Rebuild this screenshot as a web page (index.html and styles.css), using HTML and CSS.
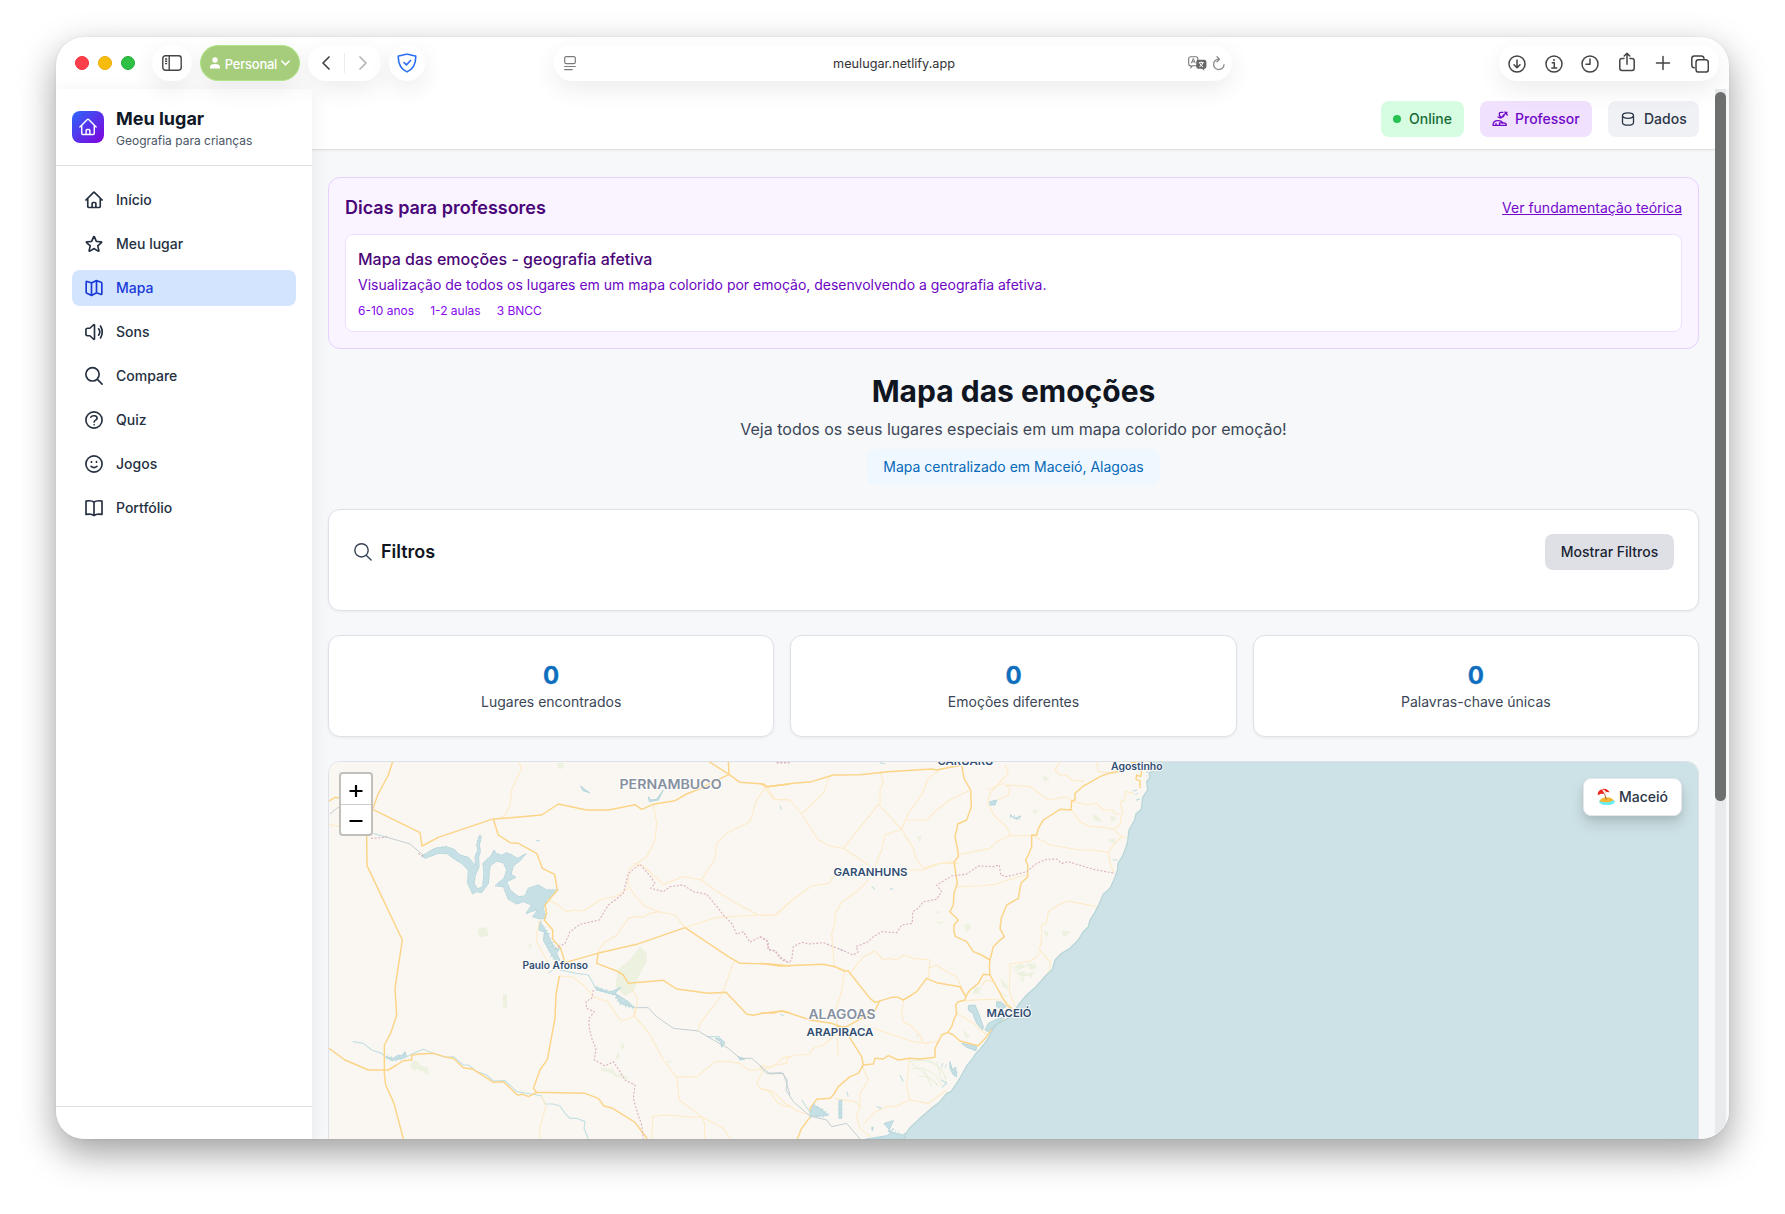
FILE: index.html
```html
<!DOCTYPE html>
<html lang="pt-BR">
<head>
<meta charset="utf-8">
<title>Meu lugar</title>
<link rel="stylesheet" href="styles.css">
</head>
<body>
<div class="window">
  <div class="toolbar">
    <div class="lights"><i class="red"></i><i class="yellow"></i><i class="green-light"></i></div>
    <div class="pill side-btn">
      <svg width="20" height="16" viewBox="0 0 20 16" fill="none" stroke="#444" stroke-width="1.4"><rect x=".8" y=".8" width="18.4" height="14.4" rx="2.6"/><path d="M7.2 1v14M3 4h2.2M3 6.300h2.200M3 8.600h2.200" /></svg>
    </div>
    <div class="pill profile">
      <svg width="10" height="12" viewBox="0 0 10 12" fill="#fff"><circle cx="5" cy="3" r="2.700"/><path d="M0 11.500V10c0-2 1.800-3 5-3s5 1 5 3v1.500z"/></svg>
      <span>Personal</span>
      <svg width="9" height="6" viewBox="0 0 9 6" fill="none" stroke="#fff" stroke-width="1.500" stroke-linecap="round"><path d="m.8 1 3.700 3.800L8.200 1"/></svg>
    </div>
    <div class="pill history">
      <svg width="8" height="14" viewBox="0 0 8 14" fill="none" stroke="#444" stroke-width="1.700" stroke-linecap="round" stroke-linejoin="round"><path d="M7 1 1 7l6 6"/></svg>
      <span class="divider"></span>
      <svg width="8" height="14" viewBox="0 0 8 14" fill="none" stroke="#b4b4b4" stroke-width="1.700" stroke-linecap="round" stroke-linejoin="round"><path d="m1 1 6 6-6 6"/></svg>
    </div>
    <div class="pill shield">
      <svg width="20" height="20" viewBox="0 0 20 20" fill="none" stroke="#2b6ef6" stroke-width="1.600" stroke-linecap="round" stroke-linejoin="round"><path d="M1.300 3C4 2.800 7 1.200 10 1.200S16 2.800 18.700 3C19 10 17 15.500 10 18.900 3 15.500 1 10 1.300 3Z"/><path d="m7 9.500 2.400 2.400L13.600 7.500"/></svg>
    </div>
    <div class="pill address">
      <svg width="12" height="15" viewBox="0 0 12 15" fill="none" stroke="#7a7a7a" stroke-width="1.200" stroke-linecap="round"><rect x=".7" y=".7" width="10.600" height="7" rx="1.600"/><path d="M.7 10.500h10.600M.7 13.700h7.500"/></svg>
      <span class="url">meulugar.netlify.app</span>
      <span class="address-tools">
        <svg width="19" height="15" viewBox="0 0 19 15"><path d="M2.500.7h5.300q2 0 2 2v5q0 2-2 2H4.500L3 11.500V9.700q-2.300 0-2.300-2v-5q0-2 1.800-2Z" fill="none" stroke="#777" stroke-width="1.100"/><path d="M3.300 7.300 5.300 2.500l2 4.800M4 5.800h2.600" fill="none" stroke="#777"/><path d="M10.300 3.800h5.900q2.200 0 2.200 2v5q0 2-2.200 2v2l-2-2h-3.900q-2 0-2-2v-5q0-2 2-2Z" fill="#666"/><path d="M10.800 6.700h5M13.300 5.500v1.200M11.400 10.800q3-1.500 3.500-4M11.700 7.200q1 2.500 3.500 3.700" fill="none" stroke="#fff"/></svg>
        <svg width="13" height="15" viewBox="0 0 13 15" fill="none" stroke="#8a8a8a" stroke-width="1.300" stroke-linecap="round" stroke-linejoin="round"><path d="M7 3.200a5.200 5.200 0 1 0 5 5.500M5 .8 7.500 3.200 5 5.700"/></svg>
      </span>
    </div>
    <div class="pill actions">
      <svg width="18" height="18" viewBox="0 0 18 18"><circle cx="9" cy="9" r="8"/><path d="M9 5v7.500M6 9.700l3 3 3-3"/></svg>
      <svg width="18" height="18" viewBox="0 0 18 18"><circle cx="9" cy="9" r="8"/><path d="M7.300 7.700h2v5M6.800 12.900h5M9 4.600v.8"/></svg>
      <svg width="18" height="18" viewBox="0 0 18 18"><circle cx="9" cy="9" r="8"/><path d="M9 4v5.200H5"/></svg>
      <svg width="18" height="20" viewBox="0 0 18 20"><path d="M6 6.500H4q-2.200 0-2.200 2.200v7.600Q1.800 18.500 4 18.500h10q2.200 0 2.200-2.200V8.700q0-2.200-2.200-2.200h-2M9 12.300V1.300M6.200 4 9 1.300 11.800 4"/></svg>
      <svg width="18" height="18" viewBox="0 0 18 18"><path d="M9 2.500v13M2.500 9h13"/></svg>
      <svg width="18" height="18" viewBox="0 0 18 18"><rect x="5" y="4.800" width="12.300" height="12.300" rx="2.600"/><path d="M3.200 12.800Q.8 12.500.8 10.300V3.400Q.8.900 3.300.9h7Q12.700.9 13 3.300"/></svg>
    </div>
  </div>

  <div class="page">
    <aside class="sidebar">
      <div class="brand">
        <div class="logo"><svg class="icon" viewBox="0 0 24 24"><use href="#home"/></svg></div>
        <div><h1>Meu lugar</h1><p>Geografia para crianças</p></div>
      </div>
      <nav>
        <a><svg class="icon" viewBox="0 0 24 24"><path id="home" d="m2.250 12 8.954-8.955c.44-.439 1.152-.439 1.591 0L21.750 12M4.500 9.750v10.125c0 .621.504 1.125 1.125 1.125H9.750v-4.875c0-.621.504-1.125 1.125-1.125h2.250c.621 0 1.125.504 1.125 1.125V21h4.125c.621 0 1.125-.504 1.125-1.125V9.750M8.250 21h8.250"/></svg>Início</a>
        <a><svg class="icon" viewBox="0 0 24 24"><path d="M11.480 3.499a.562.562 0 0 1 1.040 0l2.125 5.111a.563.563 0 0 0 .475.345l5.518.442c.499.040.701.663.321.988l-4.204 3.602a.563.563 0 0 0-.182.557l1.285 5.385a.562.562 0 0 1-.840.610l-4.725-2.885a.562.562 0 0 0-.586 0L6.982 20.540a.562.562 0 0 1-.840-.610l1.285-5.386a.562.562 0 0 0-.182-.557l-4.204-3.602a.562.562 0 0 1 .321-.988l5.518-.442a.563.563 0 0 0 .475-.345L11.480 3.500Z"/></svg>Meu lugar</a>
        <a class="active"><svg class="icon" viewBox="0 0 24 24"><path d="M9 6v15M15 3v15M9.500 5.800 14.500 3.200q.5-.2 1 0l5 1.900q.9.400.9 1.300v12.300q0 1.200-1.200.9L15.500 18q-.5-.2-1 0l-5 2.700q-.5.300-1 0l-5-2.300q-.9-.4-.9-1.300V5q0-1.300 1.200-.8L8.500 5.800q.5.200 1 0Z"/></svg>Mapa</a>
        <a><svg class="icon" viewBox="0 0 24 24"><path d="M17.500 8.200q3 3.800 0 7.600M19.800 4.800q4.200 7.200 0 14.400M12.600 4.300v15.400q0 1.700-1.300.7L7 16.500H4.300Q2.300 16.500 2.300 14.500v-5q0-2 2-2H7l4.300-3.900q1.300-1 1.300.7Z"/></svg>Sons</a>
        <a><svg class="icon" viewBox="0 0 24 24"><path id="search" d="m21.700 21.700-5.900-5.900M18.200 10a8 8 0 1 1-16 0 8 8 0 0 1 16 0Z"/></svg>Compare</a>
        <a><svg class="icon" viewBox="0 0 24 24"><circle cx="12" cy="12" r="9.700"/><path d="M8.200 8.600c1.500-2.600 7.500-2.300 7.500 1.300 0 2.500-3.500 2-3.500 4.400M12.200 17.700v.1"/></svg>Quiz</a>
        <a><svg class="icon" viewBox="0 0 24 24"><circle cx="12" cy="12" r="9.700"/><path d="M8.500 14.800q3.500 3 7 0M9 9.100v.7M15 9.100v.7"/></svg>Jogos</a>
        <a><svg class="icon" viewBox="0 0 24 24"><path d="M12 5v16M12 5Q9 2.500 2.400 3.700v16Q9 18.500 12 21q3-2.500 9.600-1.300v-16Q15 2.500 12 5Z"/></svg>Portfólio</a>
      </nav>
      <div class="sidebar-foot"></div>
    </aside>

    <div class="main">
      <header>
        <div class="chip online"><i></i>Online</div>
        <div class="chip teacher"><svg width="16" height="16" viewBox="0 0 16 16"><path d="M1 14.300q0-4.600 5-4.600 4 0 4.800 2.600M1 14.300h13.300q0-2.400-2.500-2.400H7.500v2.400M4 14v-1.500M7.300 3Q7.300 1.300 9 1.300h2M7.300 3q0 3 2.300 3.200 2.300 0 2.600-2.500M6 6l3 1.200M11 4.500l4-3.200M13 1l2.300 3"/></svg>Professor</div>
        <div class="chip data"><svg width="16" height="16" viewBox="0 0 16 16"><path d="M13.500 4.500C13.500 6.300 11 7.300 8 7.300S2.500 6.300 2.500 4.500 5 1.800 8 1.800s5.500.9 5.500 2.700ZM2.500 4.500v7q0 2.700 5.500 2.700t5.500-2.700v-7"/></svg>Dados</div>
      </header>

      <main>
        <section class="tips">
          <div class="tips-head"><h2>Dicas para professores</h2><a>Ver fundamentação teórica</a></div>
          <div class="tip">
            <h3>Mapa das emoções - geografia afetiva</h3>
            <p>Visualização de todos os lugares em um mapa colorido por emoção, desenvolvendo a geografia afetiva.</p>
            <div class="tags"><span>6-10 anos</span><span>1-2 aulas</span><span>3 BNCC</span></div>
          </div>
        </section>

        <section class="intro">
          <h2>Mapa das emoções</h2>
          <p>Veja todos os seus lugares especiais em um mapa colorido por emoção!</p>
          <span class="location">Mapa centralizado em Maceió, Alagoas</span>
        </section>

        <section class="card filters">
          <h3><svg class="icon thin" viewBox="0 0 24 24"><use href="#search"/></svg>Filtros</h3>
          <button>Mostrar Filtros</button>
        </section>

        <section class="stats">
          <div class="card stat"><b>0</b><span>Lugares encontrados</span></div>
          <div class="card stat"><b>0</b><span>Emoções diferentes</span></div>
          <div class="card stat"><b>0</b><span>Palavras-chave únicas</span></div>
        </section>

        <section class="map">
          <svg class="tiles" viewBox="329 762 1369 400" width="1369" height="400">
            <rect x="329" y="762" width="1369" height="400" fill="#faf7f2"/>
            <!-- western half: reservoir, roads, state borders -->
            <g transform="translate(310 740) scale(.333333)">
              <g class="green">
                <path d="M990 620 1010 638 1010 665 990 700 970 755 945 768 917 740 922 690 958 660ZM503 567 530 560 536 587 508 592ZM579 763h12v40h-12ZM300 975l10-14 15 5 5 10 22 6 6 24-12-4-5-10-10 2-10-8-12 6ZM655 612l12 2-8 14ZM870 982l15 4 25 2 8 14 20 3 20 8-15 6-14-8-12 0-12-12-30-6ZM935 905l10 15-12 10ZM745 68h14l4 10-8 9-10-3-4-8ZM920 945l5-12 4 17-12 10ZM1070 960l18 3-14 7Z"/>
              </g>
              <g class="lake">
                <path id="reservoir" d="M335 348 375 325 408 320 433 328 450 345 475 352 490 370 497 375 495 350 504 330 500 315 509 285 514 290 508 315 511 335 506 350 507 380 496 405 492 430 503 447 518 440 522 400 519 370 545 345 552 330 558 340 575 346 590 338 605 345 623 355 648 341 630 362 610 378 603 403 618 412 590 425 600 450 625 470 645 468 655 445 685 435 710 450 745 450 710 480 700 505 708 535 690 537 668 530 685 508 648 520 665 495 640 485 620 492 595 478 580 440 555 437 582 415 590 390 580 368 560 363 540 378 535 430 515 458 500 455 488 462 473 430 475 390 455 370 430 355 410 340 385 340 345 355Z"/>
                <path d="M690 545 700 560 712 580 735 630 750 622 740 640 750 662 738 663 722 640 700 600 704 577 687 570Z"/>
                <path d="M228 950 250 955 265 945 275 948 285 935 290 950 278 955 262 958 245 962ZM1015 170 1022 180 1040 178 1060 150 1045 180 1018 185ZM855 740 900 757 933 742 915 760 955 785 972 803 930 790 918 765 860 750ZM1215 895 1230 895 1245 908 1235 922 1232 905ZM1285 950 1305 957 1290 960ZM812 138l15 12 12 8-20-6Z"/>
              </g>
              <g class="jagged"><use href="#reservoir"/><path d="M690 545 704 577 722 640 740 663M750 622 735 630 712 580 700 560M860 745 900 757 918 765 930 790 972 803M230 952 262 958 290 945"/></g>
              <g class="river">
                <path d="M128 905 160 910 185 930 215 940 230 955M290 950 310 940 340 928 360 936 385 945 410 952 430 950 460 975 475 975 500 995 530 1005 550 1023 585 1022 620 1055 665 1062 695 1068 705 1092 730 1092 750 1098 765 1120 780 1135 800 1135 825 1145 822 1165 835 1197M190 280 230 292M750 690 800 700 835 705 855 740M715 700l25-20M1190 890h40M678 302h12"/>
              </g>
              <g class="stream"><path d="M225 290 300 312 345 350M60 222 80 205 90 200M972 803 1015 803 1040 830 1090 865 1165 873 1210 900 1255 925 1290 955 1325 955 1380 1002 1420 1000 1430 1030 1440 1065"/></g>
              <g class="minor">
                <path d="M627 65 635 85 605 150 600 195 585 225 570 237M57 253 90 260M1030 195 1040 250 1035 300 1010 350 960 385 952 430 970 460 1000 495 1045 515 1095 525 1125 563M865 635 880 610 920 585 955 535 980 530 1000 532 1020 520 1045 515M715 480 740 492 770 515 790 510 820 513 870 480 920 468 955 445M970 370 1000 378 1030 405 1060 433 1120 410 1175 420 1215 355 1220 310 1250 280 1320 245 1340 180 1368 140M1175 420 1200 440 1270 485 1345 525 1397 525 1440 487M1125 563 1215 533 1345 525M690 540 680 580 680 605 700 640 715 670M750 708 790 712 820 735 850 770 895 785 915 820 935 843 970 830 975 805M955 730 982 775 975 830 1018 880 1060 960 1100 1012 1160 1010 1185 990 1215 965 1260 965 1290 970 1315 990 1345 990 1360 975 1380 985 1425 950 1440 955M1100 1012 1108 1080 1175 1130 1240 1165 1262 1197M1026 1197 1028 1130 1060 1125 1100 1127 1140 1132 1175 1130 1184 1150 1184 1197M1272 665 1235 765 1170 850 1165 873M1360 990 1340 1030 1350 1045 1375 1050 1400 1085 1420 1098 1440 1100M695 1068 708 1100 690 1160 688 1197M1370 140 1395 178 1440 180"/>
              </g>
              <g class="major">
                <path d="M248 65 235 105 203 165 188 208 330 278 336 318 385 292 545 238 695 225 745 192 830 210 895 210 975 194 995 208 1030 193 1095 182 1130 162 1165 148 1257 103 1255 65M1197 65 1257 103 1290 127 1360 132 1370 140 1440 132M550 238 565 285 600 308 625 310 680 340 697 385 734 403 742 450 705 495 710 520 703 540 728 570 728 597 752 625 765 668 863 640 980 613 1125 563 1255 650 1290 670 1380 672 1440 678M57 183 75 172 90 175M170 285 171 377 277 600 255 745 260 825 242 880 223 915 223 1000 227 1035 252 1090 280 1197M57 925 105 960 175 990 235 990 260 975 280 962 305 960 305 945 330 942 370 940 410 952 430 955 460 983 490 988 550 1027 580 1025 622 1065 640 1063 655 1070 680 1057 825 1060 865 1075 882 1098 908 1105 975 1147 1012 1197M748 708 738 765 735 835 712 958 690 990 670 1045 680 1057M865 638 860 670 920 693 940 705 955 730 1060 721 1100 747 1195 760 1248 757 1310 822 1330 826 1365 818 1390 820 1410 813 1440 818"/>
              </g>
              <g class="border">
                <path d="M183 295 215 293 230 290M325 340l15 10M735 625 765 610 780 575 810 553 868 540 895 495 915 480 940 460 955 400 990 373 1022 410 1035 430 1022 445 1060 455 1080 440 1120 435 1150 455 1190 463 1225 505 1240 525 1265 550 1280 583 1300 575 1320 607 1350 590 1375 605 1375 628 1395 633 1415 660 1440 668M850 750 845 775 828 785 830 805 853 815 837 835 837 860 845 895 858 925 853 960 885 978 910 965 930 995 945 1020 975 1035 970 1075 983 1120 995 1155 1000 1197M1400 68h40"/>
              </g>
            </g>
            <!-- eastern half: coastline, roads, lagoons -->
            <g transform="translate(760 740) scale(.333333)">
              <g class="green"><path d="M760 680l25-10 10 12-18 4ZM800 672l25-2 5 15-18 5ZM770 700l20-6 15 12-20 5ZM800 702l22-8-8 20ZM778 716l15-4-4 14ZM720 715l22 20 4 15-16-8ZM612 555 632 550 630 570 618 577ZM525 545 555 545 540 552ZM525 515l18-2-8 8ZM645 742l22-2-14 20-15 2ZM820 210 840 212 820 222ZM1000 220 1020 235 1025 245 1000 240ZM1040 300 1065 295 1065 312ZM470 290 485 285 480 305ZM905 572 935 575 910 592ZM470 880 480 885 470 895ZM845 105 870 115 855 125ZM1050 225l20 10-15 12ZM850 570l16 8-6 15ZM605 868l25 20-10 8Z"/></g>
              <g class="veg"><path d="M450 965q70-20 110 50M455 985q60-10 90 50M475 1010q30-10 60 30M500 960q50 10 60 70M455 970l80 65M490 985l25 55M530 965l15 60M755 680l30 25M770 690l35-15M640 745l25 20M715 755l30 15"/></g>
              <g class="minor">
                <path d="M10 138 40 178 90 180 125 222 175 300 210 318 250 325 355 193 425 268 460 325 468 355 490 385 530 372 580 365M125 222 190 160 208 110M360 95 370 125 360 150 360 193M545 85 505 115 485 165 445 220 425 268 375 285 365 330 345 380M440 240 500 240 530 210 570 180 630 150M250 325 325 375M0 527 48 525 90 485 155 438 205 430 225 405M325 420 290 455 245 487 225 520 225 550 215 580 223 680 253 695M440 390 490 390 540 370 595 370M590 345 640 335 690 325 710 305 750 287 820 287 870 315 960 330 1000 330 1045 338 1050 370 1060 395M750 287 740 260 705 230 683 190 690 160 730 115 745 100 735 75M683 150 730 130 750 145 745 165 715 180M740 135 810 140 865 180 920 170 940 185 980 195 1010 190 1030 210 1060 210 1065 222 1085 222 1080 255 1060 268 1030 262 985 258 960 245 935 210M590 440 660 438 705 433 750 418 800 405M1010 500 960 490 925 483 895 495 865 515 860 545 845 555 845 600 838 630 870 665 870 690 830 740M838 640 825 655 805 665 750 672 748 755 765 800M275 695 310 650 345 633 370 660 390 655 410 660 430 645 460 655 510 660 505 715M505 685 530 675 560 695 590 710 615 765M615 782 680 778 725 780M590 820 640 850 680 885M430 780 425 820 430 845 450 855 480 885 490 910 540 903M340 865 400 885 460 905 500 910M253 695 245 755 230 800 230 850 235 950M250 865 190 915 160 925 150 942 110 945 80 952 80 970 45 975 0 990M305 975 325 1020 300 1060 300 1100 290 1130 300 1165 330 1190M448 957 440 1040 450 1080 505 1090 560 1050M448 1080 410 1098 380 1100 345 1115 310 1155M0 1047 40 1055 75 1090 110 1112 150 1125M225 1075 285 1085 300 1100M900 65 885 90 900 105 920 105 935 120 975 125M1010 65 1015 95 1060 100M1120 160 1095 155 1095 180 1080 185 1090 222M1060 268 1085 290 1100 295M1085 290 1060 315 1045 338M720 765 760 810M700 725 680 720 665 735"/>
              </g>
              <g class="major">
                <path d="M0 130 22 140 100 130 155 125 220 105 300 104 385 95 515 87 530 90 605 75 612 115 632 150 634 200 620 240 593 252 590 270 585 290 593 330 595 350 582 365 592 430 582 460 580 495 570 515 595 540 582 555 582 575 587 590 620 605 640 635 665 645 690 660M1075 95 1055 98 1035 104 1020 110 985 130 970 138 945 160 945 180 935 183 933 210 900 208 850 240 835 265 830 285 815 285 815 320 805 345 797 360 803 375 803 410 783 430 775 475 740 495 730 520 725 530 720 565 733 590 715 605 700 620 690 660 688 680 690 705 740 795 755 805M690 705 670 703 655 730 630 750 620 765 615 780 595 785 587 795 590 820 583 835 575 860 563 877 545 885 525 925 525 952 480 957 450 955 415 960 385 947 370 957 345 955 340 972 310 975 295 1000 270 1010 235 1040 220 1065 210 1075 170 1078 150 1105 152 1130 140 1145 125 1165 112 1197M0 670 60 678 190 673 225 680 255 693 265 693 330 775 345 787 395 772 415 772 430 780 455 765 470 755 500 715 530 728 600 740 617 770M0 820 70 813 150 840 215 850 250 862 305 950 310 975M230 860 260 860 345 812 358 785M563 877 580 885 600 903 655 917 680 890 705 850 740 838M1110 65 1130 68M1145 90 1142 110 1130 105 1128 118 1140 122 1140 145"/>
              </g>
              <path class="sea" d="M1180 60 1178 93 1168 100 1170 112 1160 125 1163 150 1148 172 1144 208 1128 222 1124 240 1107 270 1103 303 1097 325 1087 350 1074 370 1073 388 1064 415 1050 445 1030 463 1017 493 1003 520 990 540 985 560 970 575 955 600 930 625 905 640 885 660 877 688 850 715 828 740 800 765 775 795 750 832 715 850 700 865 683 898 662 925 648 940 638 955 620 978 605 1005 590 1030 573 1055 560 1060 540 1085 520 1100 485 1130 450 1163 435 1185 437 1270H2820V60Z"/>
              <g class="lake"><path d="M625 797 645 795 655 818 670 860 668 870 650 850 638 820 625 810ZM710 785 725 787 738 800 725 808 710 800ZM675 870 685 850 715 835 735 832 705 855 685 875ZM605 910 650 920 648 932 620 922ZM160 1095 180 1105 205 1125 160 1130 150 1120ZM237 1085 245 1080 245 1135 237 1135ZM373 1150 400 1142 385 1175 430 1185 435 1197H318L380 1187 395 1178ZM570 965 575 985 588 990 590 1010 580 1005 570 985ZM750 225 765 235 783 228 770 238ZM690 185 710 180 705 195 690 195ZM335 1162l5 0-3 10Z"/></g>
              <g class="jagged"><path d="M160 1095 205 1125 150 1128M241 1080v55M375 1150l30 28 30 8M750 228l30 5M690 190l20-5M545 975l40 12 3 20M1165 95v30M1125 150l10 30"/></g>
              <g class="river"><path d="M335 440 345 448M390 445 400 448M60 198 65 210M360 68 375 72M420 1005 430 1025M545 1020 560 1030 545 1042M350 1100 365 1105M260 1055 265 1070M125 1080 155 1125M235 625l15 8M1058 360h15M60 822l12 6"/></g>
              <g class="stream"><path d="M0 978 20 1000 65 998 82 1020 78 1050 100 1085 150 1128 200 1140 215 1160 260 1150 300 1197"/></g>
              <g class="border"><path d="M0 590 20 600 25 630 45 632 60 650 85 668 95 660 100 620 125 607 150 612 190 608 220 620 240 628 280 645 295 635 288 620 325 605 340 590 365 575 410 578 425 555 457 550 458 515 475 505 490 485 530 478 545 455 530 435 575 408 620 402 655 378 700 380 718 375 722 405 740 410 800 395 830 370 860 358 890 357 905 370 925 365 1000 388 1065 400M50 68h35"/></g>
            </g>
            <g class="labels">
              <text x="619.500" y="789" font-size="12.500" textLength="102" lengthAdjust="spacingAndGlyphs" class="state">PERNAMBUCO</text>
              <text x="808.500" y="1019" font-size="12.500" textLength="67" lengthAdjust="spacingAndGlyphs" class="state">ALAGOAS</text>
              <text x="522.500" y="969.300" font-size="10" textLength="65.500" lengthAdjust="spacingAndGlyphs">Paulo Afonso</text>
              <text x="833.500" y="876.300" font-size="11" textLength="74" lengthAdjust="spacingAndGlyphs">GARANHUNS</text>
              <text x="806.500" y="1035.800" font-size="11" textLength="67" lengthAdjust="spacingAndGlyphs">ARAPIRACA</text>
              <text x="986.500" y="1016.800" font-size="11" textLength="45" lengthAdjust="spacingAndGlyphs">MACEIÓ</text>
              <text x="937.500" y="764.500" font-size="11" textLength="56" lengthAdjust="spacingAndGlyphs">CARUARU</text>
              <text x="1111" y="769.500" font-size="10" textLength="51.500" lengthAdjust="spacingAndGlyphs">Agostinho</text>
            </g>
          </svg>
          <div class="zoom"><span><svg width="14" height="14" viewBox="0 0 14 14"><path d="M7 1v12M.5 7h13"/></svg></span><span><svg width="14" height="14" viewBox="0 0 14 14"><path d="M.5 7h13"/></svg></span></div>
          <div class="city">
            <svg width="18" height="18" viewBox="0 0 18 18"><ellipse cx="10" cy="13.800" rx="7.900" ry="3.300" fill="#69ecf2"/><path d="M2.500 13q2-3.700 7-3.700 5.500.2 7 3-3 2-7 2-4.500 0-7-1.300Z" fill="#f7b733"/><path d="M7.500 5.500 9.300 11.500" stroke="#a9663d"/><path d="M.8 7.300Q.3 2.500 4.800 1.200 9.500-.2 12.700 4.200L9.500 4 7 6 4 5.700Z" fill="#e8291c"/><path d="M4.800 1.200Q7 1 9.500 4L7 6Q6.800 3.500 4.800 1.200Z" fill="#fff0e8"/></svg>
            <span>Maceió</span>
          </div>
        </section>
      </main>
    </div>
    <div class="scrollbar"><i></i></div>
  </div>
</div>
</body>
</html>
```
FILE: styles.css
```css
* { box-sizing: border-box; margin: 0; padding: 0; }
body { width: 1785px; height: 1214px; overflow: hidden; background: #fff; padding: 37px 56px 0; font-family: Inter, "Liberation Sans", sans-serif; color: #1e2939; font-size: 14px; line-height: 20px; }
.window { width: 1673px; height: 1102px; border-radius: 28px; overflow: hidden; background: #fff; box-shadow: 0 14px 36px rgba(0,0,0,.38), 0 0 2px rgba(0,0,0,.1); display: flex; flex-direction: column; }
svg { display: block; flex: none; }

/* Browser toolbar */
.toolbar { height: 52px; flex: none; display: flex; align-items: flex-start; padding: 8px 10px 0 19px; position: relative; z-index: 2; }
.lights { display: flex; gap: 9px; height: 36px; align-items: center; margin-right: 17px; }
.lights i { width: 14px; height: 14px; border-radius: 50%; }
.red { background: #fe3f4b; border: 1px solid #f02a38; }
.yellow { background: #f8bc0c; border: 1px solid #e9ab08; }
.green-light { background: #2fc146; border: 1px solid #22ad36; }
.pill { height: 36px; border-radius: 18px; background: #fff; box-shadow: 0 8px 24px rgba(0,0,0,.08); display: flex; align-items: center; justify-content: center; margin-right: 8px; flex: none; }
.side-btn { width: 40px; }
.profile { width: 100px; background: #a5cd7b; border: 1px solid #b1e486; color: #fff; font-size: 13px; font-weight: 500; gap: 4px; }
.profile span { letter-spacing: -.25px; padding-top: 1px; }
.profile svg:first-child { margin-right: 1px; }
.history { width: 73px; justify-content: space-between; padding: 0 14px; }
.divider { width: 1px; height: 20px; background: #ececec; }
.shield { width: 36px; margin-right: 129px; }
.address { width: 678px; justify-content: space-between; padding: 0 7px 0 10px; margin-right: 0; }
.url { font-size: 12.700px; color: #333; padding: 1px 0 0 24px; }
.address-tools { display: flex; gap: 5px; align-items: center; }
.actions { width: 220px; margin: 0 0 0 auto; justify-content: space-between; padding: 2px 10px 0 9px; }
.actions svg { fill: none; stroke: #444; stroke-width: 1.500; stroke-linecap: round; stroke-linejoin: round; }
.actions svg:nth-child(4) { margin-top: -4px; }
.actions svg:nth-child(5) { margin-top: -2px; }

/* Application shell */
.page { display: flex; flex: 1; min-height: 0; }
.sidebar { width: 256px; flex: none; display: flex; flex-direction: column; background: #fff; box-shadow: 0 4px 18px rgba(0,0,0,.08); z-index: 1; }
.brand { height: 77px; border-bottom: 1px solid #dedfe1; display: flex; align-items: center; gap: 12px; padding: 0 16px; flex: none; }
.logo { width: 32px; height: 32px; border-radius: 8px; background: linear-gradient(135deg, #2b67fb, #8200db); display: grid; place-items: center; color: #fff; }
.brand h1 { font-size: 18px; line-height: 28px; font-weight: 700; color: #101828; margin-top: -1px; }
.brand p { font-size: 12px; line-height: 16px; color: #4a5565; }
.icon { width: 20px; height: 20px; fill: none; stroke: currentColor; stroke-width: 2; stroke-linecap: round; stroke-linejoin: round; }
.logo .icon { stroke-width: 1.700; }
.icon.thin { stroke-width: 1.700; }
nav { padding: 16px; display: flex; flex-direction: column; gap: 8px; flex: 1; }
nav a { display: flex; align-items: center; gap: 12px; height: 36px; padding: 0 12px; border-radius: 8px; font-weight: 500; color: #253041; }
nav .active { background: #d3e4ff; color: #1a3ad8; }
.sidebar-foot { height: 33px; border-top: 1px solid #dedfe1; flex: none; }
.main { flex: 1; min-width: 0; display: flex; flex-direction: column; background: #f7f8fa; }
header { height: 61px; flex: none; background: #fff; border-bottom: 1px solid #dfe1e5; box-shadow: 0 1px 2px rgba(0,0,0,.05); display: flex; justify-content: flex-end; gap: 16px; padding: 12px 16px; }
.chip { height: 36px; border-radius: 8px; padding: 0 12px; display: flex; align-items: center; font-weight: 500; }
.chip svg { fill: none; stroke: currentColor; stroke-width: 1.300; stroke-linecap: round; stroke-linejoin: round; }
.online { background: #d6fde2; color: #176b36; gap: 8px; width: 83px; }
.online i { width: 8px; height: 8px; border-radius: 50%; background: #25c251; }
.teacher { background: #f0e1ff; color: #7008c7; gap: 7px; width: 112px; }
.data { background: #f0f1f5; color: #2b3647; gap: 8px; width: 91px; }
main { padding: 27px 16px 0; display: flex; flex-direction: column; gap: 24px; flex: 1; min-height: 0; overflow: hidden; }
main > * { flex: none; }

/* Teacher tips */
.tips { border: 1px solid #e6cfff; border-radius: 12px; background: #f9f4ff; padding: 16px; }
.tips-head { display: flex; justify-content: space-between; align-items: center; margin-bottom: 12px; }
.tips h2 { font-size: 18px; line-height: 28px; font-weight: 600; color: #4a0678; }
.tips-head a { color: #7408cc; text-decoration: underline; }
.tip { background: #fff; border: 1px solid #eedfff; border-radius: 8px; padding: 12px; }
.tip h3 { font-size: 16px; line-height: 24px; font-weight: 500; color: #4a0678; margin-bottom: 4px; }
.tip p { color: #6d04c4; }
.tags { display: flex; gap: 16px; margin-top: 8px; font-size: 12px; line-height: 16px; color: #8509ec; }

.intro { text-align: center; display: flex; flex-direction: column; align-items: center; gap: 8px; }
.intro h2 { font-size: 30px; line-height: 36px; font-weight: 700; color: #101522; }
.intro p { font-size: 16px; line-height: 24px; color: #3b4656; }
.location { background: #eff8ff; color: #0668b8; border-radius: 8px; padding: 8px 16px; }

.card { background: #fff; border: 1px solid #dfe1e8; border-radius: 12px; box-shadow: 0 1px 3px rgba(0,0,0,.06); }
.filters { height: 102px; padding: 24px; display: flex; justify-content: space-between; align-items: flex-start; }
.filters h3 { display: flex; align-items: center; gap: 8px; height: 36px; font-size: 18px; font-weight: 600; color: #101522; }
.filters h3 svg { color: #364153; }
.filters button { width: 129px; height: 36px; border: 0; border-radius: 8px; background: #dfe0e6; color: #1a2433; font: 500 14px/20px Inter, sans-serif; }
.stats { display: grid; grid-template-columns: repeat(3, 1fr); gap: 16px; }
.stat { height: 102px; padding: 24px; text-align: center; display: flex; flex-direction: column; }
.stat b { font-size: 24px; line-height: 32px; color: #0f6fbe; font-weight: 700; -webkit-text-stroke: .3px #0f6fbe; }
.stat span { color: #3b4656; }

/* Map */
.map { position: relative; height: 402px; border: 1px solid #dfe1e8; border-radius: 12px 12px 0 0; overflow: hidden; }
.tiles path { stroke-linejoin: round; }
.green path { fill: #edf1df; }
.veg path { fill: none; stroke: #e9efda; stroke-width: 3; }
.lake path { fill: #c7e0e5; stroke: #b5d6dc; stroke-width: 3; }
.jagged path, .jagged use { fill: none; stroke: #bddbe0; stroke-width: 13; stroke-dasharray: 3 9 2 14 4 7; }
.jagged use path { fill: none; }
.river path { fill: none; stroke: #c3e0e3; stroke-width: 3.500; }
.stream path { fill: none; stroke: #c2cfd1; stroke-width: 3; }
.minor path { fill: none; stroke: #fdebc9; stroke-width: 3.400; }
.major path { fill: none; stroke: #fbd487; stroke-width: 4.400; }
.border path { fill: none; stroke: #dbb3be; stroke-width: 3.400; stroke-dasharray: 6 5; }
.sea { fill: #cde2e6; stroke: #b9d6d9; stroke-width: 4; }
.labels text { font-family: Inter, sans-serif; font-weight: 600; fill: #314d72; stroke: #fff; stroke-opacity: .75; stroke-width: 2px; paint-order: stroke; }
.labels .state { fill: #87909f; }
.zoom { position: absolute; left: 10px; top: 10px; width: 34px; border: 2px solid #c2c0bb; border-radius: 4px; background: #fff; }
.zoom span { display: flex; align-items: center; justify-content: center; height: 30px; padding-top: 3px; }
.zoom svg { stroke: #000; stroke-width: 2.200; }
.zoom span + span { border-top: 1px solid #ccc; }
.city { position: absolute; top: 16px; right: 16px; width: 99px; height: 38px; border: 1px solid #e5e7eb; border-radius: 8px; background: #fff; box-shadow: 0 8px 14px rgba(0,0,0,.13), 0 3px 5px rgba(0,0,0,.06); display: flex; align-items: center; gap: 4px; padding: 0 13px; font-weight: 500; color: #2b3647; }
.scrollbar { width: 14px; padding: 3px 3px 0 0; background: linear-gradient(90deg, #e9eaeb 11px, #f7f8fa 11px); }
.scrollbar i { display: block; height: 709px; border-radius: 6px; background: #6d706f; }
```
